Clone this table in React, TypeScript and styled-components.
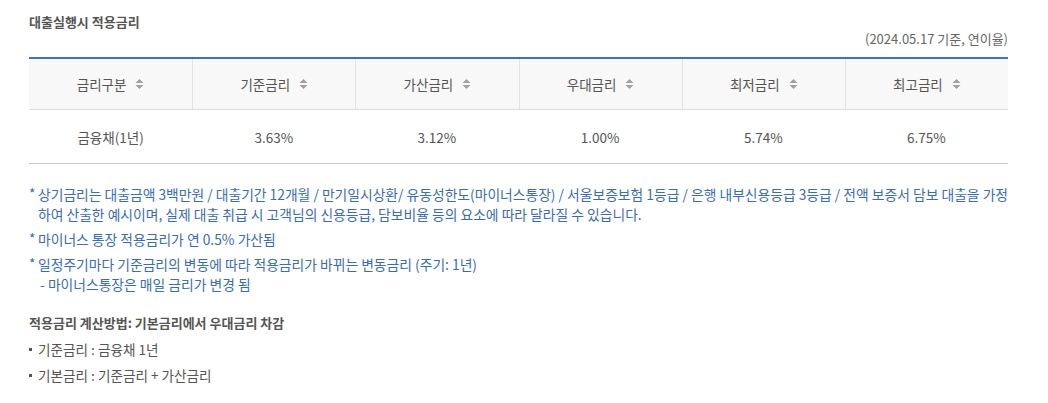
import React from 'react';
import styled, { createGlobalStyle } from 'styled-components';

const GlobalStyle = createGlobalStyle`
  html, body {
    margin: 0;
    padding: 0;
    background: #fff;
  }
  body {
    font-family: 'Noto Sans CJK KR', 'Noto Sans', sans-serif;
    color: #555;
  }
`;

const Page = styled.div`
  width: 1048px;
  padding: 13px 40px 0 29px;
  box-sizing: border-box;
`;

const Title = styled.h3`
  margin: 0;
  font-size: 13px;
  font-weight: 700;
  color: #555;
  line-height: 18px;
`;

const BaseDate = styled.div`
  text-align: right;
  font-size: 13px;
  color: #666;
  line-height: 18px;
  margin-top: -1px;
`;

const Table = styled.div`
  margin-top: 9px;
  border-top: 2px solid #3b73c4;
  border-bottom: 1px solid #c8c8c8;
`;

const Row = styled.div<{ head?: boolean }>`
  display: grid;
  grid-template-columns: repeat(6, 1fr);
  height: ${(p) => (p.head ? '50px' : '53px')};
  background: ${(p) => (p.head ? '#f8f8f8' : '#fff')};
  border-bottom: ${(p) => (p.head ? '1px solid #dcdcdc' : 'none')};
`;

const Cell = styled.div<{ head?: boolean }>`
  display: flex;
  align-items: center;
  justify-content: center;
  gap: 9px;
  font-size: 13.5px;
  color: #555;
  border-left: ${(p) => (p.head ? '1px solid #e4e4e4' : 'none')};

  &:first-child {
    border-left: none;
  }
`;

const SortIcon = () => (
  <svg width="9" height="12" viewBox="0 0 9 12">
    <path d="M4.5 1 L8.5 5 H0.5 Z" fill="#a0a0a0" />
    <path d="M4.5 11 L8.5 7 H0.5 Z" fill="#a0a0a0" />
  </svg>
);

const Notes = styled.ul`
  list-style: none;
  margin: 20px 0 0;
  padding: 0;
  font-size: 13.8px;
  color: #3a6cb0;
  line-height: 20px;
`;

const Note = styled.li`
  position: relative;
  padding-left: 9px;
  margin-bottom: 5px;

  &::before {
    content: '*';
    position: absolute;
    left: 0;
    top: -1px;
  }
`;

const SubNote = styled.div`
  padding-left: 2px;
`;

const Method = styled.div`
  margin-top: 19px;
  color: #555;
`;

const MethodTitle = styled.div`
  font-size: 13px;
  font-weight: 700;
  line-height: 20px;
`;

const MethodItem = styled.div`
  display: flex;
  align-items: center;
  gap: 6px;
  font-size: 13.6px;
  line-height: 20px;
  margin-top: 6px;

  &::before {
    content: '';
    width: 3px;
    height: 3px;
    background: #555;
  }
`;

const headers = ['금리구분', '기준금리', '가산금리', '우대금리', '최저금리', '최고금리'];
const values = ['금융채(1년)', '3.63%', '3.12%', '1.00%', '5.74%', '6.75%'];

export default function App() {
  return (
    <>
      <GlobalStyle />
      <Page>
        <Title>대출실행시 적용금리</Title>
        <BaseDate>(2024.05.17 기준, 연이율)</BaseDate>
        <Table>
          <Row head>
            {headers.map((h) => (
              <Cell head key={h}>
                {h}
                <SortIcon />
              </Cell>
            ))}
          </Row>
          <Row>
            {values.map((v) => (
              <Cell key={v}>{v}</Cell>
            ))}
          </Row>
        </Table>
        <Notes>
          <Note>
            상기금리는 대출금액 3백만원 / 대출기간 12개월 / 만기일시상환/ 유동성한도(마이너스통장) / 서울보증보험 1등급 / 은행 내부신용등급 3등급 / 전액 보증서 담보 대출을 가정하여 산출한 예시이며, 실제 대출 취급 시 고객님의 신용등급, 담보비율 등의 요소에 따라 달라질 수 있습니다.
          </Note>
          <Note>마이너스 통장 적용금리가 연 0.5% 가산됨</Note>
          <Note>
            일정주기마다 기준금리의 변동에 따라 적용금리가 바뀌는 변동금리 (주기: 1년)
            <SubNote>- 마이너스통장은 매일 금리가 변경 됨</SubNote>
          </Note>
        </Notes>
        <Method>
          <MethodTitle>적용금리 계산방법: 기본금리에서 우대금리 차감</MethodTitle>
          <MethodItem>기준금리 : 금융채 1년</MethodItem>
          <MethodItem>기본금리 : 기준금리 + 가산금리</MethodItem>
        </Method>
      </Page>
    </>
  );
}
